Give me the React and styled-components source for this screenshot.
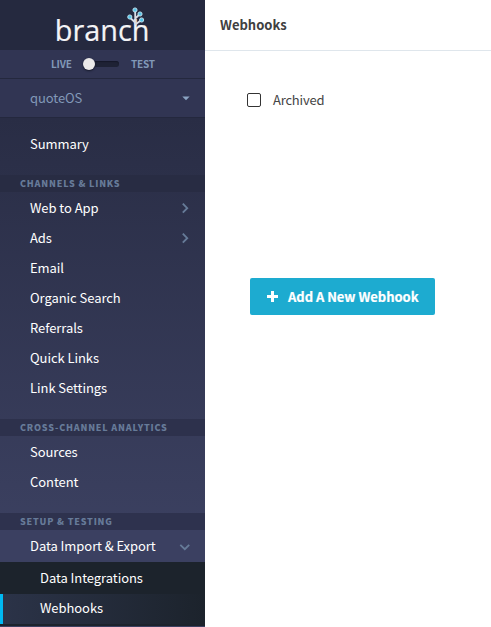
import React from "react";
import styled, { createGlobalStyle } from "styled-components";

const Global = createGlobalStyle`
  *, *::before, *::after { box-sizing: border-box; }
  body { margin: 0; background: #fff; overflow: hidden; }
  body, button { font-family: "Noto Sans CJK SC", "Open Sans", sans-serif; }
`;

const Page = styled.div`
  display: flex;
  width: 491px;
  height: 627px;
  overflow: hidden;
`;

const Sidebar = styled.aside`
  display: flex;
  flex-direction: column;
  flex: 0 0 205px;
  height: 627px;
  background: #3b4061;
`;

const LogoBar = styled.div`
  flex: 0 0 50px;
  background: #25293f;
  svg { display: block; }
`;

const ModeBar = styled.div`
  display: flex;
  align-items: center;
  flex: 0 0 29px;
  padding-left: 51px;
  background: #313553;
  border-bottom: 1px solid #24283e;
`;

const ModeLabel = styled.span`
  width: ${(p) => p.$width}px;
  color: #8299b8;
  font-size: 10px;
  font-weight: 700;
  line-height: 28px;
  letter-spacing: -0.2px;
  white-space: nowrap;
`;

const Track = styled.div`
  display: flex;
  align-items: center;
  width: 36px;
  height: 6px;
  margin: 0 12px 0 11px;
  border-radius: 3px;
  background: #1e2235;
  box-shadow: inset 0 1px 1px #15182a;
`;

const Knob = styled.div`
  width: 12px;
  height: 12px;
  border-radius: 50%;
  background: #ebe9e9;
  box-shadow: 0 1px 2px #15182a;
`;

const AppPicker = styled.div`
  display: flex;
  align-items: center;
  justify-content: space-between;
  flex: 0 0 39px;
  padding: 0 15px 0 30px;
  background: #313553;
  border-bottom: 1px solid #24283e;
  color: #8299b8;
  font-size: 13px;
  line-height: 38px;
  letter-spacing: -0.1px;
`;

const Nav = styled.nav`
  flex: 0 0 412px;
  background: linear-gradient(#292d45, #3b4060);
`;

const Group = styled.div`
  height: ${(p) => p.$height}px;
  padding-top: ${(p) => p.$top || 0}px;
`;

const GroupTitle = styled.div`
  height: 17px;
  margin-bottom: 1px;
  padding-left: 20px;
  background: ${(p) => p.$bg};
  color: #677b99;
  font-size: 9px;
  font-weight: 900;
  line-height: 17px;
  letter-spacing: 0.8px;
  white-space: nowrap;
`;

const Item = styled.div`
  display: flex;
  align-items: center;
  justify-content: space-between;
  height: ${(p) => p.$height || 30}px;
  padding: 0 15px 0 30px;
  color: #fff;
  font-size: 13px;
  line-height: 30px;
  letter-spacing: -0.06px;
  white-space: nowrap;
`;

const SubMenu = styled.div`
  height: 64px;
  background: #1c232c;
`;

const SubItem = styled.div`
  height: ${(p) => p.$height}px;
  padding-left: ${(p) => (p.$active ? 37 : 40)}px;
  border-left: ${(p) => (p.$active ? "3px solid #00b9f2" : "0")};
  background: ${(p) => (p.$active ? "linear-gradient(90deg, #2b3348, #1c232c)" : "none")};
  color: #fff;
  font-size: 13px;
  line-height: ${(p) => p.$line}px;
  letter-spacing: -0.06px;
  white-space: nowrap;
`;

const Main = styled.main`
  flex: 1;
`;

const Header = styled.h1`
  height: 51px;
  margin: 0;
  padding-left: 15px;
  border-bottom: 1px solid #dfe6ec;
  color: #404040;
  font-size: 13px;
  font-weight: 700;
  line-height: 50px;
`;

const Content = styled.div`
  display: flex;
  flex-direction: column;
  align-items: flex-start;
`;

const Filter = styled.label`
  display: flex;
  align-items: center;
  gap: 12px;
  height: 30px;
  margin: 34px 0 163px 42px;
  color: #454545;
  font-size: 13px;
  line-height: 30px;
  letter-spacing: -0.2px;
`;

const Box = styled.span`
  width: 14px;
  height: 14px;
  border: 1px solid #333;
  border-radius: 2px;
`;

const AddButton = styled.button`
  display: flex;
  align-items: center;
  gap: 10px;
  width: 185px;
  height: 37px;
  margin-left: 45px;
  padding: 0 0 0 17px;
  border: 0;
  border-radius: 2px;
  background: #1dabd0;
  color: #fff;
  font-size: 13px;
  font-weight: 700;
  line-height: 36px;
  letter-spacing: -0.03px;
  -webkit-text-stroke: 0.2px #fff;
  white-space: nowrap;
`;

const Logo = () => (
  <svg width="205" height="50" viewBox="0 0 205 50" role="img" aria-label="branch">
    <text x="54.8" y="41.3" textLength="94.6" lengthAdjust="spacingAndGlyphs" fill="#f4f4f6" stroke="#f4f4f6" strokeWidth="0.2" fontFamily="Open Sans" fontWeight="400" fontSize="30">branch</text>
    <g fill="none" stroke="#d9dce4" strokeWidth="1.8">
      <path d="M135.2 24V10M135.2 22.5L129.8 17.5M135.2 18.5L140 14M135.2 24.5L141.5 20" />
    </g>
    <g fill="#54c5ea" stroke="#c9e6f2" strokeWidth="0.9">
      <circle cx="135" cy="10" r="2.1" />
      <circle cx="129.8" cy="17" r="2.1" />
      <circle cx="140" cy="14" r="2.1" />
      <circle cx="141.6" cy="20" r="2.1" />
    </g>
  </svg>
);

const Chevron = () => (
  <svg width="10" height="12" viewBox="0 0 10 12" fill="none" stroke="#667b98" strokeWidth="1.9">
    <path d="M2.8 1.7L7.2 6.2L2.8 10.7" />
  </svg>
);

const ChevronDown = () => (
  <svg width="11" height="12" viewBox="0 0 11 12" fill="none" stroke="#667b98" strokeWidth="1.8">
    <path d="M1.3 4.8L5.8 9.2L10.2 4.8" />
  </svg>
);

const Caret = () => (
  <svg width="8" height="5" viewBox="0 0 8 5">
    <path d="M0.3 0.5H7.7L4 4.3Z" fill="#8ba3c2" />
  </svg>
);

const Plus = () => (
  <svg width="11" height="11" viewBox="0 0 11 11" stroke="#fff" strokeWidth="3">
    <path d="M5.5 0V11M0 5.5H11" />
  </svg>
);

export default function App() {
  return (
    <Page>
      <Global />
      <Sidebar>
        <LogoBar><Logo /></LogoBar>
        <ModeBar>
          <ModeLabel $width={21}>LIVE</ModeLabel>
          <Track><Knob /></Track>
          <ModeLabel $width={24}>TEST</ModeLabel>
        </ModeBar>
        <AppPicker>quoteOS<Caret /></AppPicker>
        <Nav>
          <Group $height={57} $top={11}>
            <Item>Summary</Item>
          </Group>
          <Group $height={244}>
            <GroupTitle $bg="#282c43">CHANNELS &amp; LINKS</GroupTitle>
            <Item>Web to App<Chevron /></Item>
            <Item>Ads<Chevron /></Item>
            <Item>Email</Item>
            <Item>Organic Search</Item>
            <Item>Referrals</Item>
            <Item>Quick Links</Item>
            <Item>Link Settings</Item>
          </Group>
          <Group $height={94}>
            <GroupTitle $bg="#2d314c">CROSS-CHANNEL ANALYTICS</GroupTitle>
            <Item>Sources</Item>
            <Item>Content</Item>
          </Group>
          <Group $height={17}>
            <GroupTitle $bg="#2e324e">SETUP &amp; TESTING</GroupTitle>
          </Group>
        </Nav>
        <Item $height={32}>Data Import &amp; Export<ChevronDown /></Item>
        <SubMenu>
          <SubItem $height={32} $line={32}>Data Integrations</SubItem>
          <SubItem $active $height={30} $line={28}>Webhooks</SubItem>
        </SubMenu>
      </Sidebar>
      <Main>
        <Header>Webhooks</Header>
        <Content>
          <Filter><Box />Archived</Filter>
          <AddButton><Plus />Add A New Webhook</AddButton>
        </Content>
      </Main>
    </Page>
  );
}
